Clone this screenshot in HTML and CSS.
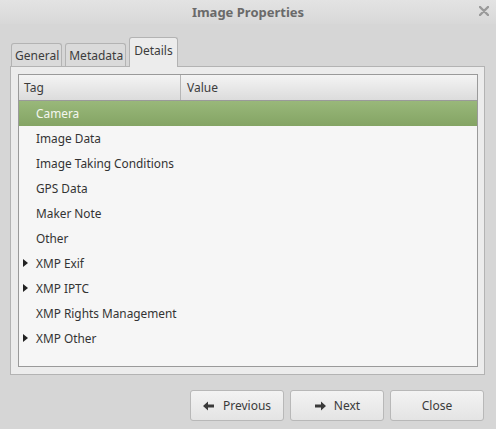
FILE: index.html
```html
<!DOCTYPE html>
<html>
<head>
<meta charset="utf-8">
<link rel="stylesheet" href="styles.css">
</head>
<body>
<div class="window">
  <div class="titlebar">
    <span class="title">Image Properties</span>
    <svg class="close" width="10" height="10" viewBox="0 0 10 10"><path d="M1 1L9 9M9 1L1 9" stroke="#9a9a9a" stroke-width="2.4" stroke-linecap="round"/></svg>
  </div>
  <div class="content">
    <div class="tabs">
      <div class="tab">General</div>
      <div class="tab">Metadata</div>
      <div class="tab active">Details</div>
    </div>
    <div class="panel">
      <div class="tree">
        <div class="header">
          <div class="col tag">Tag</div>
          <div class="col value">Value</div>
        </div>
        <div class="row selected"><span class="exp"></span>Camera</div>
        <div class="row"><span class="exp"></span>Image Data</div>
        <div class="row"><span class="exp"></span>Image Taking Conditions</div>
        <div class="row"><span class="exp"></span>GPS Data</div>
        <div class="row"><span class="exp"></span>Maker Note</div>
        <div class="row"><span class="exp"></span>Other</div>
        <div class="row"><span class="exp arrow"></span>XMP Exif</div>
        <div class="row"><span class="exp arrow"></span>XMP IPTC</div>
        <div class="row"><span class="exp"></span>XMP Rights Management</div>
        <div class="row"><span class="exp arrow"></span>XMP Other</div>
      </div>
    </div>
    <div class="buttons">
      <button class="btn"><svg width="12" height="10" viewBox="0 0 12 10"><path d="M0 5L5 0.5V3.5H11V6.5H5V9.5Z" fill="#3a3a3a"/></svg>Previous</button>
      <button class="btn"><svg width="12" height="10" viewBox="0 0 12 10"><path d="M12 5L7 0.5V3.5H1V6.5H7V9.5Z" fill="#3a3a3a"/></svg>Next</button>
      <button class="btn">Close</button>
    </div>
  </div>
</div>
</body>
</html>
```

FILE: styles.css
```css
html, body {
  margin: 0;
  padding: 0;
  background: #d6d6d6;
}
body {
  font-family: "Noto Sans", "Open Sans", sans-serif;
  font-size: 12px;
  color: #3c3c3c;
}
.window {
  width: 496px;
  height: 429px;
  display: flex;
  flex-direction: column;
}
.titlebar {
  height: 24px;
  flex: none;
  position: relative;
  display: flex;
  align-items: center;
  justify-content: center;
  background: linear-gradient(#e3e3e3, #d8d8d8);
}
.title {
  font-weight: bold;
  font-size: 13px;
  color: #6a6a6a;
}
.close {
  position: absolute;
  right: 7px;
  top: 6px;
}
.content {
  padding: 13px 11px 0 10px;
}
.tabs {
  display: flex;
  align-items: flex-end;
  gap: 3px;
  padding-left: 1px;
  height: 29px;
  position: relative;
  z-index: 1;
}
.tab {
  height: 23px;
  padding: 0 2px 0 3px;
  box-sizing: border-box;
  border: 1px solid #b3b3b3;
  border-bottom: none;
  border-radius: 3px 3px 0 0;
  background: #dadada;
  line-height: 23px;
  color: #3c3c3c;
}
.tab.active {
  line-height: 26px;
  background: #ececec;
  padding: 0 4px 0 4px;
  margin-bottom: -1px;
  height: 30px;
}
.panel {
  border: 1px solid #b3b3b3;
  background: #ececec;
  padding: 7px 6px 7px 7px;
  height: 309px;
  box-sizing: border-box;
}
.tree {
  border: 1px solid #9a9a9a;
  background: #f6f6f6;
  height: 100%;
  box-sizing: border-box;
}
.header {
  display: flex;
  height: 26px;
  background: linear-gradient(#f4f4f4, #dcdcdc);
  border-bottom: 1px solid #9a9a9a;
  box-sizing: border-box;
}
.col {
  line-height: 25px;
  padding-left: 5px;
}
.col.tag {
  width: 156px;
  border-right: 1px solid #b5b5b5;
}
.col.value {
  padding-left: 6px;
}
.row {
  height: 25px;
  line-height: 25px;
  display: flex;
  align-items: center;
  color: #333;
  font-size: 11.85px;
}
.row.selected {
  background: linear-gradient(#99b87a, #84a464);
  color: #f4f7ef;
}
.exp {
  width: 17px;
  height: 25px;
  flex: none;
  position: relative;
}
.exp.arrow::after {
  content: "";
  position: absolute;
  left: 4px;
  top: 8px;
  border-left: 5px solid #222;
  border-top: 4px solid transparent;
  border-bottom: 4px solid transparent;
}
.buttons {
  display: flex;
  justify-content: flex-end;
  gap: 6px;
  margin-top: 15px;
  padding-right: 1px;
}
.btn {
  width: 94px;
  height: 31px;
  border: 1px solid #b8b8b8;
  border-radius: 3px;
  background: linear-gradient(#f3f3f3, #e4e4e4);
  font-family: inherit;
  font-size: 12px;
  color: #3a3a3a;
  display: flex;
  align-items: center;
  justify-content: center;
  gap: 8px;
  padding: 0;
}
```
